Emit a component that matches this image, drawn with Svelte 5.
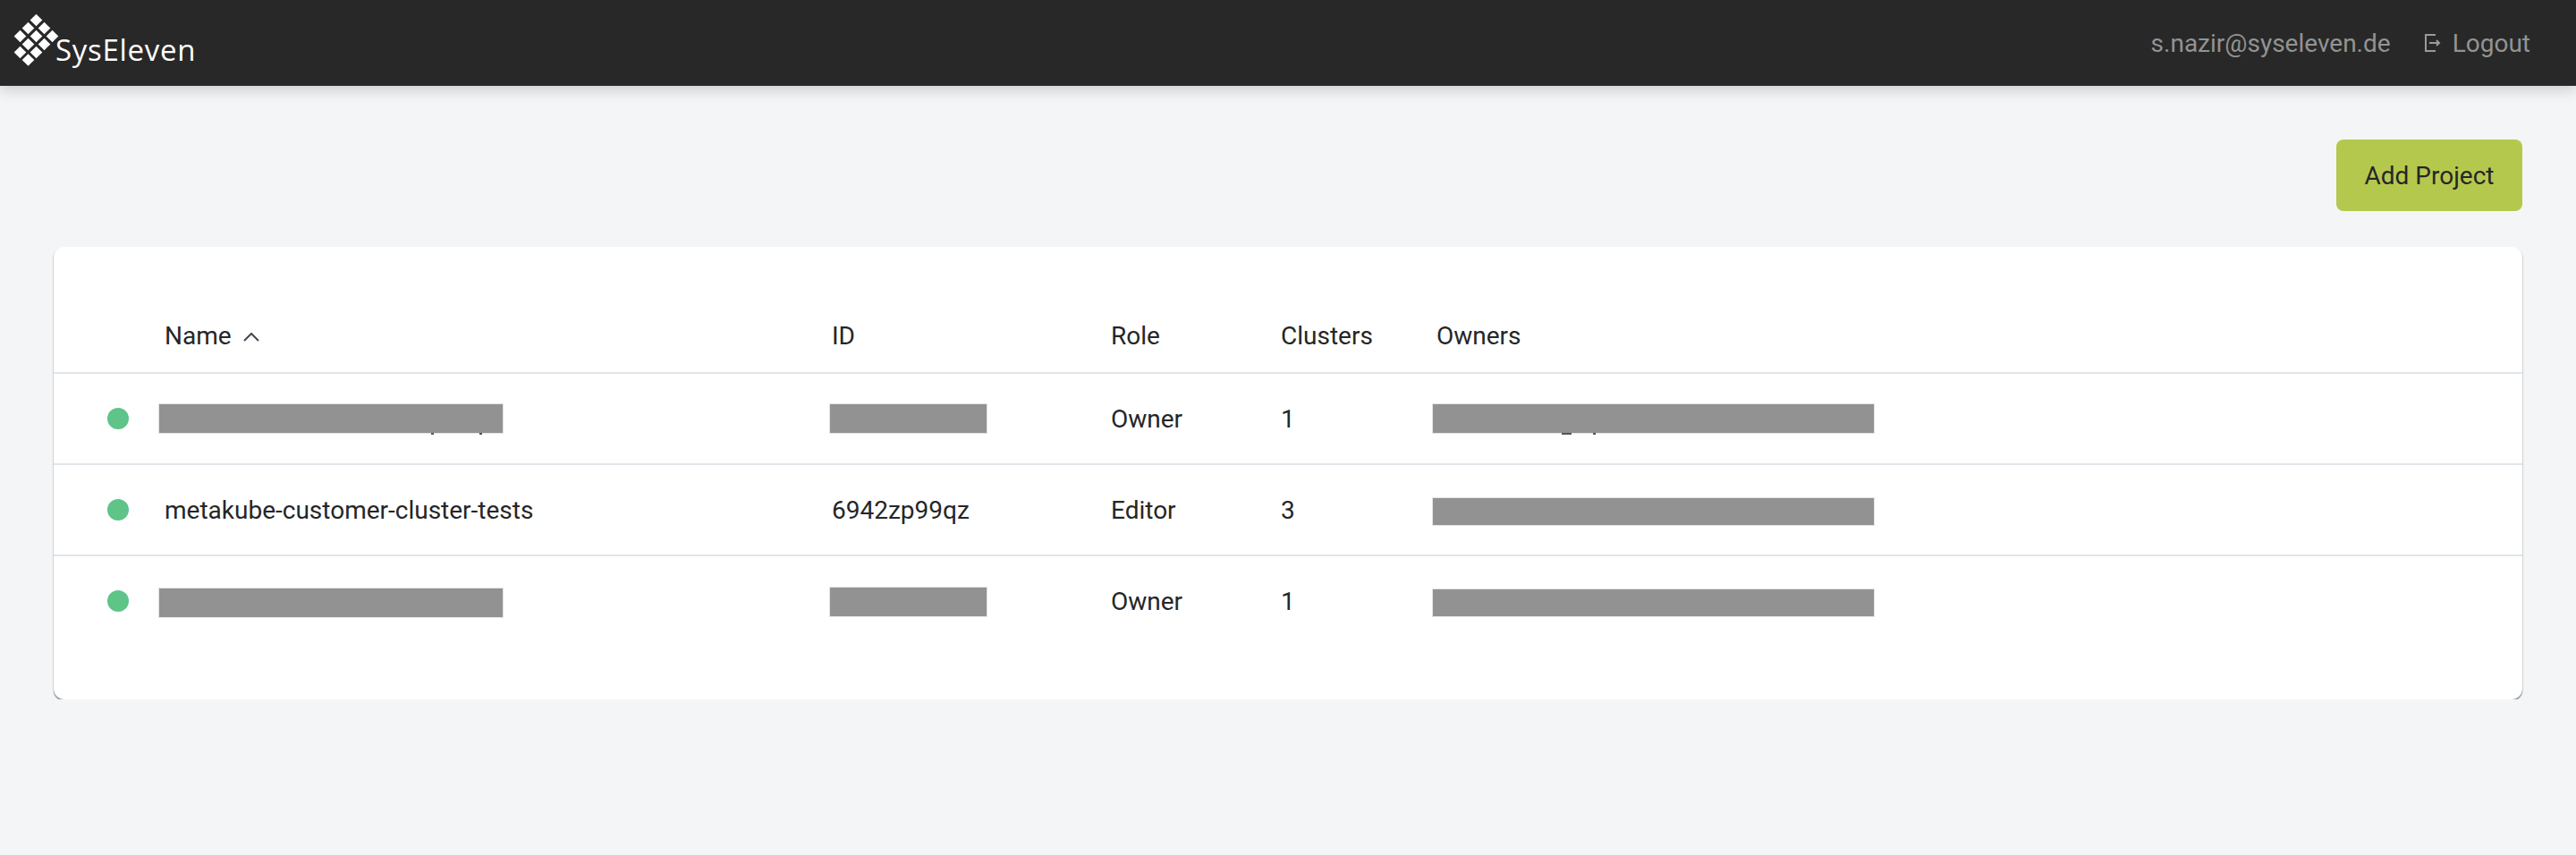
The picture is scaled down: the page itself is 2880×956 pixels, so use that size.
<script>
  // projects table, ids that were blacked out in the original stay as bars
  const projects = [
    { name: null, id: null, role: "Owner", clusters: 1, tails: true, nameTop: 0, idTop: 0, ownerTop: 0, ownerH: 32 },
    { name: "metakube-customer-cluster-tests", id: "6942zp99qz", role: "Editor", clusters: 3, ownerTop: 2, ownerH: 30 },
    { name: null, id: null, role: "Owner", clusters: 1, nameTop: 2, idTop: 1, ownerTop: 2, ownerH: 30 }
  ];

  const diamonds = [
    [40.5, 22.5], [31.5, 31.5], [49.5, 31.5], [22.5, 40.5], [40.5, 40.5], [58.5, 40.5],
    [31.5, 49.5], [49.5, 49.5], [22.5, 58.5], [40.5, 58.5], [31.5, 67]
  ];
</script>

<header class="topbar">
  <div class="logo">
    <svg class="mark" width="70" height="70" viewBox="10 10 70 70">
      {#each diamonds as [x, y]}
        <path d="M{x} {y - 6.8}L{x + 6.8} {y}L{x} {y + 6.8}L{x - 6.8} {y}Z" fill="#fff" />
      {/each}
    </svg>
    <span class="wordmark">SysEleven</span>
  </div>
  <nav class="user">
    <span>s.nazir@syseleven.de</span>
    <a class="logout" href="#top">
      <svg width="18" height="20" viewBox="0 0 18 20" fill="none" stroke="#9a9a9a" stroke-width="2">
        <path d="M12 1H1V19H12M5 10H16M13 7L16 10L13 13" />
      </svg>
      Logout
    </a>
  </nav>
</header>

<main class="page">
  <div class="actions">
    <button class="add">Add Project</button>
  </div>

  <section class="card">
    <table>
      <colgroup>
        <col class="c-status" /><col class="c-name" /><col class="c-id" /><col class="c-role" /><col class="c-clusters" /><col />
      </colgroup>
      <thead>
        <tr>
          <th></th>
          <th>Name
            <svg class="sort" width="18" height="10" viewBox="0 0 18 10" fill="none" stroke="#3f4852" stroke-width="2">
              <path d="M1 9L9 1L17 9" />
            </svg>
          </th>
          <th>ID</th>
          <th>Role</th>
          <th>Clusters</th>
          <th>Owners</th>
        </tr>
      </thead>
      <tbody>
        {#each projects as p}
          <tr>
            <td><span class="dot"></span></td>
            <td>
              {#if p.name}{p.name}{:else}
                <span class="bar bar-name" style="top: {p.nameTop}px">
                  {#if p.tails}<i class="tail" style="left: 304px"></i><i class="tail" style="left: 358px"></i>{/if}
                </span>
              {/if}
            </td>
            <td>
              {#if p.id}{p.id}{:else}<span class="bar bar-id" style="top: {p.idTop}px"></span>{/if}
            </td>
            <td>{p.role}</td>
            <td>{p.clusters}</td>
            <td>
              <span class="bar bar-owner" style="top: {p.ownerTop}px; height: {p.ownerH}px">
                {#if p.tails}<i class="tail" style="left: 144px; width: 11px"></i><i class="tail" style="left: 179px"></i>{/if}
              </span>
            </td>
          </tr>
        {/each}
      </tbody>
    </table>
  </section>
</main>

<style>
  :global(body) {
    background: #f4f5f7;
    color: #262626;
    font-family: Roboto, "Liberation Sans", sans-serif;
    font-size: 28px;
  }
  .topbar {
    height: 96px;
    background: #282828;
    display: flex;
    justify-content: space-between;
    box-shadow: 0 4px 16px rgba(0, 0, 0, 0.18);
  }
  .logo {
    display: flex;
    align-items: flex-start;
  }
  .mark {
    margin: 10px 0 0 10px;
  }
  .wordmark {
    margin: 34px 0 0 -18px;
    font-family: "Open Sans", sans-serif;
    font-size: 33px;
    font-weight: 500;
    line-height: 44px;
    letter-spacing: 0.7px;
    color: #fff;
  }
  .user {
    display: flex;
    align-items: center;
    gap: 38px;
    padding-right: 51px;
    color: #939393;
  }
  .logout {
    display: flex;
    align-items: center;
    gap: 13px;
    color: inherit;
    text-decoration: none;
  }
  .page {
    padding: 60px 60px 0;
  }
  .actions {
    display: flex;
    justify-content: flex-end;
    margin-bottom: 40px;
  }
  .add {
    width: 208px;
    height: 80px;
    border: 0;
    border-radius: 8px;
    background: #b5c84e;
    color: #262626;
    font: inherit;
  }
  .card {
    background: #fff;
    border-radius: 12px;
    padding: 56px 0 60px;
    box-shadow: 0 2px 1px rgba(0, 0, 0, 0.32), -1px 1px 1px rgba(0, 0, 0, 0.12), 1px 1px 1px rgba(0, 0, 0, 0.12);
  }
  table {
    width: 100%;
    border-collapse: collapse;
    table-layout: fixed;
  }
  .c-status { width: 118px; }
  .c-name { width: 746px; }
  .c-id { width: 312px; }
  .c-role { width: 190px; }
  .c-clusters { width: 174px; }
  th {
    height: 82px;
    padding: 2px 0 0 6px;
    font-weight: 400;
    text-align: left;
    border-bottom: 2px solid #e1e5ea;
  }
  .sort {
    margin-left: 6px;
    vertical-align: 3px;
  }
  td {
    height: 100px;
    padding: 0 0 0 6px;
    border-bottom: 2px solid #e1e5ea;
  }
  tbody tr:last-child td {
    border-bottom: 0;
  }
  .dot {
    display: block;
    width: 24px;
    height: 24px;
    margin-left: 54px;
    border-radius: 50%;
    background: #5ec488;
  }
  .bar {
    display: block;
    position: relative;
    height: 32px;
    background: #929292;
    outline: 1px solid #e4e4e4;
  }
  .bar-name {
    width: 384px;
    margin-left: -6px;
  }
  .bar-id {
    width: 175px;
    margin-left: -2px;
  }
  .bar-owner {
    width: 493px;
    margin-left: -4px;
  }
  /* descender bits sticking out under the redaction */
  .tail {
    position: absolute;
    top: 100%;
    width: 3px;
    height: 2px;
    background: #555;
  }
</style>
